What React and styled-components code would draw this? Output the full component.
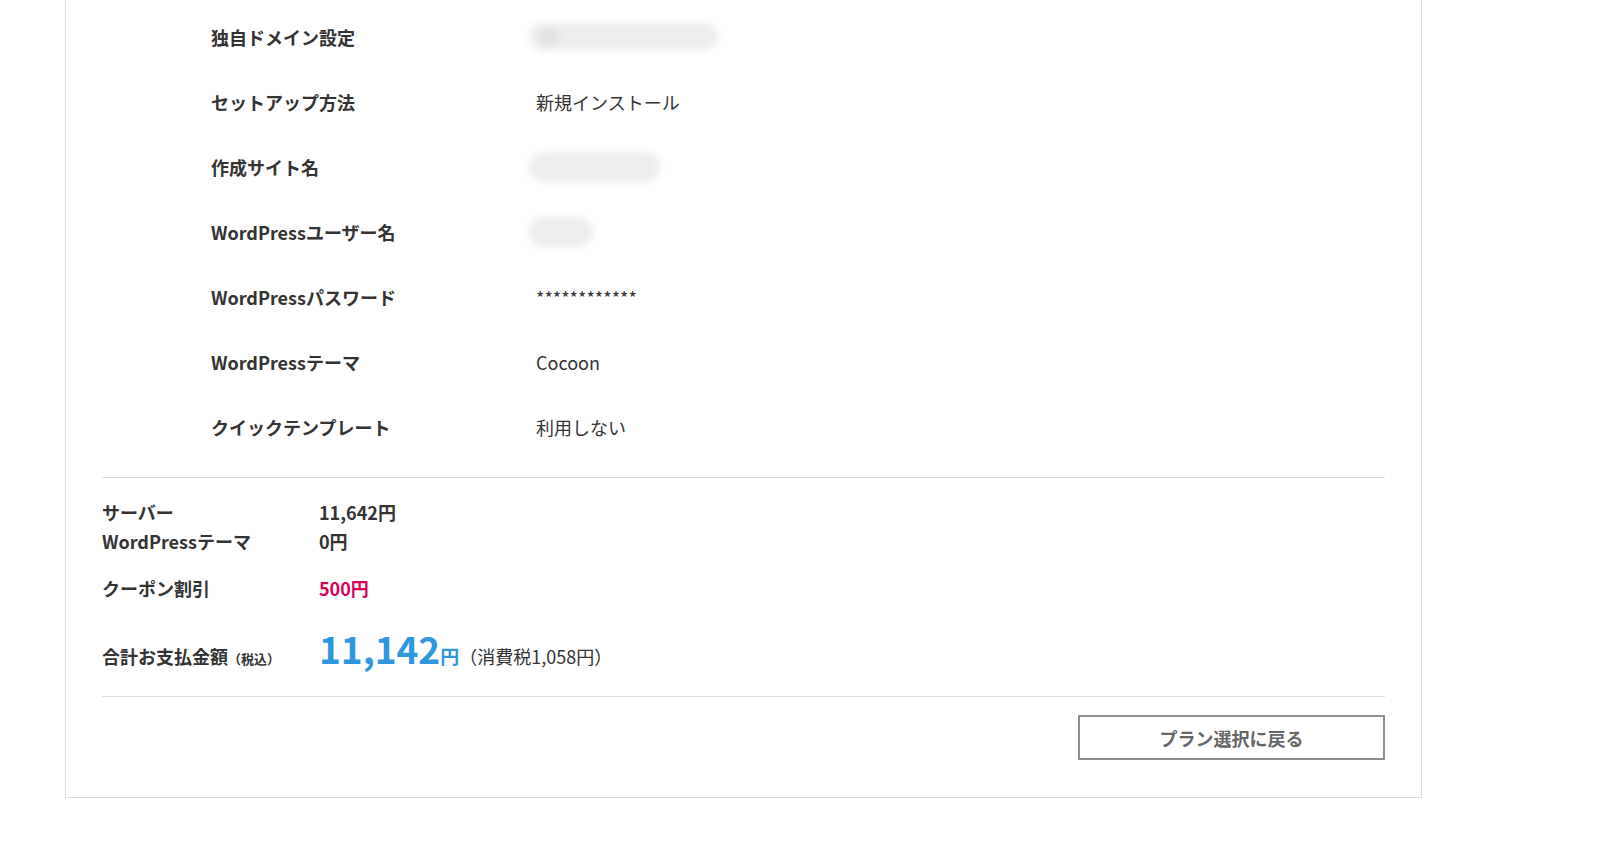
import styled, { createGlobalStyle } from "styled-components";

const GlobalStyle = createGlobalStyle`
  html, body {
    margin: 0;
    padding: 0;
    background: #fff;
  }
  body {
    font-family: "Noto Sans CJK JP", "Noto Sans", sans-serif;
    color: #333;
  }
`;

const details = [
  { label: "独自ドメイン設定", blur: { width: 189, height: 27, dot: true } },
  { label: "セットアップ方法", value: "新規インストール" },
  { label: "作成サイト名", blur: { width: 131, height: 30 } },
  { label: "WordPressユーザー名", blur: { width: 64, height: 30 } },
  { label: "WordPressパスワード", value: "************" },
  { label: "WordPressテーマ", value: "Cocoon" },
  { label: "クイックテンプレート", value: "利用しない" },
];

const App = () => {
  return (
    <>
      <GlobalStyle />
      <Page>
        <Panel>
          <DetailList>
            {details.map((d) => (
              <DetailRow key={d.label}>
                <DetailLabel>{d.label}</DetailLabel>
                {d.blur ? (
                  <Blurred $w={d.blur.width} $h={d.blur.height}>
                    {d.blur.dot && <BlurDot />}
                  </Blurred>
                ) : (
                  <DetailValue>{d.value}</DetailValue>
                )}
              </DetailRow>
            ))}
          </DetailList>

          <Summary>
            <PriceRow>
              <PriceLabel>サーバー</PriceLabel>
              <PriceValue>11,642円</PriceValue>
            </PriceRow>
            <PriceRow>
              <PriceLabel>WordPressテーマ</PriceLabel>
              <PriceValue>0円</PriceValue>
            </PriceRow>
            <PriceRow $gap={18}>
              <PriceLabel>クーポン割引</PriceLabel>
              <PriceValue $discount>500円</PriceValue>
            </PriceRow>
            <TotalRow>
              <TotalLabel>
                合計お支払金額<small>（税込）</small>
              </TotalLabel>
              <TotalAmount>
                11,142<span>円</span>
              </TotalAmount>
              <TaxNote>（消費税1,058円）</TaxNote>
            </TotalRow>
          </Summary>

          <Actions>
            <BackButton type="button">プラン選択に戻る</BackButton>
          </Actions>
        </Panel>
      </Page>
    </>
  );
};

const Page = styled.div`
  min-height: 853px;
  padding-left: 65px;
`;

const Panel = styled.section`
  width: 1357px;
  box-sizing: border-box;
  border: 1px solid #ddd;
  border-top: none;
  padding: 4px 36px 0;
`;

const DetailList = styled.div`
  padding: 0 0 18px 109px;
`;

const DetailRow = styled.div`
  display: grid;
  grid-template-columns: 325px 1fr;
  align-items: center;
  height: 65px;
  font-size: 18px;
`;

const DetailLabel = styled.div`
  font-weight: 700;
  color: #333;
`;

const DetailValue = styled.div`
  font-weight: 400;
  color: #333;
`;

const Blurred = styled.div`
  position: relative;
  width: ${(p) => p.$w}px;
  height: ${(p) => p.$h}px;
  margin-left: -7px;
  border-radius: ${(p) => p.$h / 2}px;
  background: #ededed;
  filter: blur(3px);
`;

const BlurDot = styled.div`
  position: absolute;
  left: 10px;
  top: 4px;
  width: 20px;
  height: 20px;
  border-radius: 50%;
  background: #e2e2e2;
`;

const Summary = styled.div`
  border-top: 1px solid #ddd;
  border-bottom: 1px solid #ddd;
  padding: 20px 0 16px;
  font-size: 18px;
  line-height: 29px;
  font-weight: 700;
`;

const PriceRow = styled.div`
  display: grid;
  grid-template-columns: 217px 1fr;
  margin-top: ${(p) => p.$gap || 0}px;
`;

const PriceLabel = styled.div`
  color: #333;
`;

const PriceValue = styled.div`
  color: ${(p) => (p.$discount ? "#d6005b" : "#333")};
`;

const TotalRow = styled.div`
  display: flex;
  align-items: baseline;
  margin-top: 21px;
`;

const TotalLabel = styled.div`
  width: 217px;
  color: #333;

  small {
    font-size: 13px;
    font-weight: 700;
  }
`;

const TotalAmount = styled.div`
  font-size: 37px;
  line-height: 48px;
  font-weight: 700;
  color: #2f97dd;

  span {
    font-size: 19px;
  }
`;

const TaxNote = styled.div`
  font-weight: 400;
  color: #333;
`;

const Actions = styled.div`
  display: flex;
  justify-content: flex-end;
  padding: 18px 0 37px;
`;

const BackButton = styled.button`
  width: 307px;
  height: 45px;
  box-sizing: border-box;
  border: 2px solid #8e8e8e;
  background: #fff;
  font-family: inherit;
  font-size: 18px;
  font-weight: 700;
  color: #666;
  cursor: pointer;
`;

export default App;
